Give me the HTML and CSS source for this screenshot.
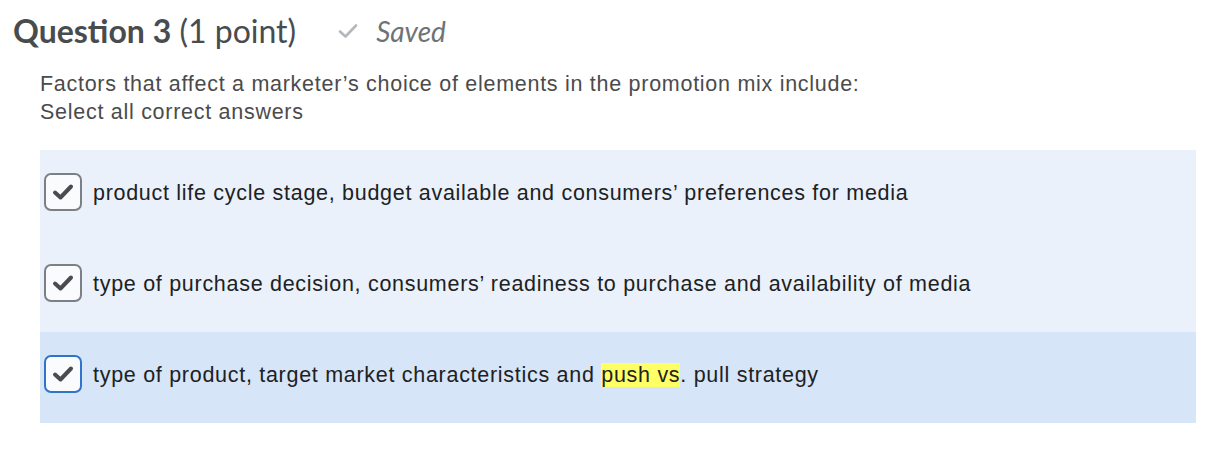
FILE: index.html
```html
<!DOCTYPE html>
<html>
<head>
<meta charset="utf-8">
<link rel="stylesheet" href="styles.css">
</head>
<body>
<div class="page">
  <div class="header">
    <h2 class="title"><span class="qnum">Question 3</span> <span class="pts">(1 point)</span></h2>
    <div class="saved">
      <svg class="saved-icon" width="20" height="16" viewBox="0 0 20 16"><path d="M2 8.5 L7.5 13.5 L18 2.5" fill="none" stroke="#b4b8bb" stroke-width="2.6" stroke-linecap="round" stroke-linejoin="round"/></svg>
      <span class="saved-text">Saved</span>
    </div>
  </div>
  <div class="question">
    <div>Factors that affect a marketer’s choice of elements in the promotion mix include:</div>
    <div>Select all correct answers</div>
  </div>
  <div class="options">
    <label class="option">
      <span class="box"><svg width="22" height="18" viewBox="0 0 22 18"><path d="M3 9.5 L8.5 14.5 L19 3.5" fill="none" stroke="#494c4e" stroke-width="4" stroke-linecap="round" stroke-linejoin="round"/></svg></span>
      <span class="opt-text">product life cycle stage, budget available and consumers’ preferences for media</span>
    </label>
    <label class="option">
      <span class="box"><svg width="22" height="18" viewBox="0 0 22 18"><path d="M3 9.5 L8.5 14.5 L19 3.5" fill="none" stroke="#494c4e" stroke-width="4" stroke-linecap="round" stroke-linejoin="round"/></svg></span>
      <span class="opt-text">type of purchase decision, consumers’ readiness to purchase and availability of media</span>
    </label>
    <label class="option focused">
      <span class="box"><svg width="22" height="18" viewBox="0 0 22 18"><path d="M3 9.5 L8.5 14.5 L19 3.5" fill="none" stroke="#494c4e" stroke-width="4" stroke-linecap="round" stroke-linejoin="round"/></svg></span>
      <span class="opt-text">type of product, target market characteristics and <mark class="hl">push vs</mark>. pull strategy</span>
    </label>
  </div>
</div>
</body>
</html>
```
FILE: styles.css
```css
* { box-sizing: border-box; }
html, body { margin: 0; padding: 0; background: #ffffff; }
.page { padding: 8px 24px 0 40px; }
.header { display: flex; align-items: center; margin-left: -27px; height: 45px; }
.title { margin: 0; font-family: Lato, "Open Sans", sans-serif; font-size: 32px; color: #494c4e; font-weight: 400; letter-spacing: 0; }
.qnum { font-weight: 700; }
.saved { display: flex; align-items: center; margin-left: 42px; }
.saved-icon { margin-right: 18px; }
.saved-text { font-family: Lato, "Open Sans", sans-serif; font-style: italic; font-size: 28px; color: #6e7376; }
.question { margin-top: 17px; font-family: "Liberation Sans", Arial, sans-serif; font-size: 21.5px; line-height: 28px; letter-spacing: 0.72px; color: #4b4b4b; }
.options { margin-top: 24px; width: 1156px; }
.option { display: flex; align-items: center; height: 91px; padding: 0 0 8px 4px; background: #eaf1fb; }
.option.focused { background: #d6e5f8; }
.box { width: 38px; height: 38px; flex: none; border: 2px solid #7c8084; border-radius: 7px; background: #f9fbfd; display: flex; align-items: center; justify-content: center; }
.focused .box { border-color: #2f74c8; }
.opt-text { margin-left: 11px; padding-top: 3px; font-family: "Liberation Sans", Arial, sans-serif; font-size: 21.5px; letter-spacing: 0.71px; color: #202122; }
.hl { background: #ffff66; color: #202122; padding: 0; }
```
